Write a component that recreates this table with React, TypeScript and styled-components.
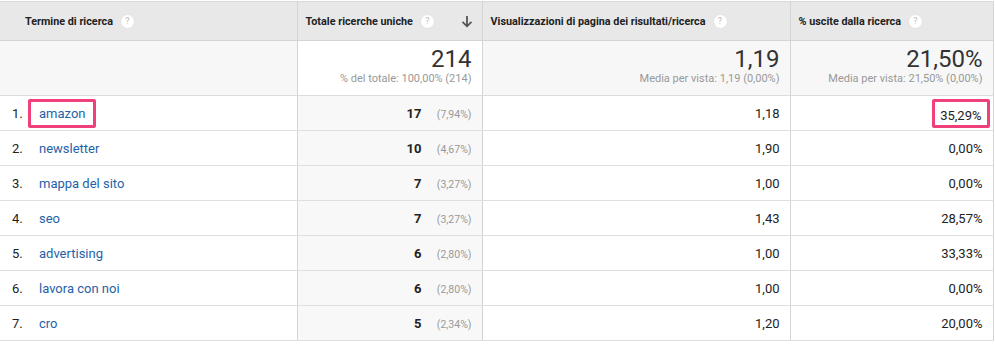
import styled, { createGlobalStyle } from 'styled-components';

const GlobalStyle = createGlobalStyle`
  body {
    margin: 0;
    background: #fff;
    font-family: Roboto, "Liberation Sans", Arial, sans-serif;
    color: #222;
  }
`;

const Wrap = styled.div`
  padding-top: 1px;
`;

const Table = styled.table`
  border-collapse: collapse;
  table-layout: fixed;
  width: 993px;
  border-top: 1px solid #d9d9d9;
`;

const HeadCell = styled.th<{ $pad?: number }>`
  height: 38px;
  padding: 0 9px 0 ${p => p.$pad ?? 8}px;
  background: #e8e8e8;
  border-right: 1px solid #d4d4d4;
  border-bottom: 1px solid #d4d4d4;
  font-size: 10.8px;
  font-weight: 700;
  color: #222;
  text-align: left;
  white-space: nowrap;
`;

const HeadInner = styled.div`
  display: flex;
  align-items: center;
  gap: 7px;
`;

const Help = styled.span`
  display: inline-flex;
  align-items: center;
  justify-content: center;
  width: 13px;
  height: 13px;
  border-radius: 50%;
  background: #fff;
  border: 1px solid #e2e2e2;
  color: #bcbcbc;
  font-size: 9px;
  font-weight: 400;
`;

const SortArrow = styled.svg`
  margin-left: auto;
`;

const SummaryCell = styled.td<{ $active?: boolean }>`
  height: 54px;
  padding: 0 10px;
  background: ${p => (p.$active ? '#fff' : '#f7f7f7')};
  border-right: 1px solid #d4d4d4;
  border-bottom: 1px solid #dcdcdc;
  text-align: right;
  vertical-align: top;
`;

const Big = styled.div`
  margin-top: 5px;
  font-size: 24px;
  line-height: 27px;
  color: #333;
`;

const Sub = styled.div`
  font-size: 11px;
  color: #999;
  line-height: 12px;
`;

const Cell = styled.td<{ $active?: boolean; $left?: boolean }>`
  height: 34px;
  padding: 0 10px;
  background: ${p => (p.$active ? '#f8f8f8' : '#fff')};
  border-right: 1px solid #d4d4d4;
  border-bottom: 1px solid #dfdfdf;
  text-align: ${p => (p.$left ? 'left' : 'right')};
  font-size: 13px;
  color: #222;
  white-space: nowrap;
`;

const TermWrap = styled.div`
  display: flex;
  align-items: center;
  padding-left: 2px;
`;

const Index = styled.span`
  width: 27px;
  font-size: 13px;
  color: #222;
`;

const Term = styled.span<{ $marked?: boolean }>`
  color: #1f62a8;
  font-size: 13px;
  line-height: 15px;
  padding: ${p => (p.$marked ? '4px 8px' : '0')};
  margin-left: ${p => (p.$marked ? '-11px' : '0')};
  border: ${p => (p.$marked ? '3px solid #f0407a' : 'none')};
  border-radius: 2px;
`;

const Count = styled.span`
  font-weight: 700;
`;

const Pct = styled.span`
  display: inline-block;
  width: 50px;
  text-align: right;
  font-size: 10.5px;
  color: #999;
`;

const Marked = styled.span`
  display: inline-block;
  padding: 6px 5px 2px 5px;
  margin-right: -7px;
  border: 3px solid #f0407a;
  border-radius: 2px;
`;

const rows = [
  { term: 'amazon', n: 17, p: '7,94%', v: '1,18', e: '35,29%' },
  { term: 'newsletter', n: 10, p: '4,67%', v: '1,90', e: '0,00%' },
  { term: 'mappa del sito', n: 7, p: '3,27%', v: '1,00', e: '0,00%' },
  { term: 'seo', n: 7, p: '3,27%', v: '1,43', e: '28,57%' },
  { term: 'advertising', n: 6, p: '2,80%', v: '1,00', e: '33,33%' },
  { term: 'lavora con noi', n: 6, p: '2,80%', v: '1,00', e: '0,00%' },
  { term: 'cro', n: 5, p: '2,34%', v: '1,20', e: '20,00%' },
];

export default function App() {
  return (
    <Wrap>
      <GlobalStyle />
      <Table>
        <colgroup>
          <col style={{ width: 297 }} />
          <col style={{ width: 185 }} />
          <col style={{ width: 308 }} />
          <col style={{ width: 203 }} />
        </colgroup>
        <thead>
          <tr>
            <HeadCell $pad={25}>
              <HeadInner>Termine di ricerca <Help>?</Help></HeadInner>
            </HeadCell>
            <HeadCell>
              <HeadInner>
                Totale ricerche uniche <Help>?</Help>
                <SortArrow width="12" height="13" viewBox="0 0 12 13">
                  <path d="M6 1v10M1.5 6.8 6 11.3l4.5-4.5" fill="none" stroke="#555" strokeWidth="1.8" />
                </SortArrow>
              </HeadInner>
            </HeadCell>
            <HeadCell>
              <HeadInner>
                Visualizzazioni di pagina dei risultati/ricerca <Help>?</Help>
              </HeadInner>
            </HeadCell>
            <HeadCell>
              <HeadInner>% uscite dalla ricerca <Help>?</Help></HeadInner>
            </HeadCell>
          </tr>
        </thead>
        <tbody>
          <tr>
            <SummaryCell />
            <SummaryCell $active>
              <Big>214</Big>
              <Sub>% del totale: 100,00% (214)</Sub>
            </SummaryCell>
            <SummaryCell>
              <Big>1,19</Big>
              <Sub>Media per vista: 1,19 (0,00%)</Sub>
            </SummaryCell>
            <SummaryCell>
              <Big>21,50%</Big>
              <Sub>Media per vista: 21,50% (0,00%)</Sub>
            </SummaryCell>
          </tr>
          {rows.map((r, i) => (
            <tr key={r.term}>
              <Cell $left>
                <TermWrap>
                  <Index>{i + 1}.</Index>
                  <Term $marked={i === 0}>{r.term}</Term>
                </TermWrap>
              </Cell>
              <Cell $active>
                <Count>{r.n}</Count>
                <Pct>({r.p})</Pct>
              </Cell>
              <Cell>{r.v}</Cell>
              <Cell>{i === 0 ? <Marked>{r.e}</Marked> : r.e}</Cell>
            </tr>
          ))}
        </tbody>
      </Table>
    </Wrap>
  );
}
